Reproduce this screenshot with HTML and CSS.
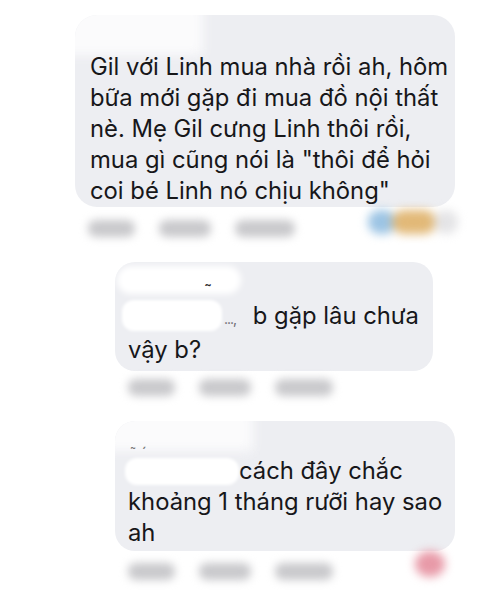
FILE: index.html
```html
<!DOCTYPE html>
<html lang="vi">
<head>
<meta charset="utf-8">
<title>Bình luận</title>
<link rel="stylesheet" href="styles.css">
</head>
<body>
<div class="thread">
  <div class="comment c1">
    <div class="bubble b1">
      <span class="mask mask-name1"></span>
      <p class="text">Gil với Linh mua nhà rồi ah, hôm<br>bữa mới gặp đi mua đồ nội thất<br>nè. Mẹ Gil cưng Linh thôi rồi,<br>mua gì cũng nói là "thôi để hỏi<br>coi bé Linh nó chịu không"</p>
    </div>
    <div class="actions a-row1">
      <span class="act w47"></span>
      <span class="act w53"></span>
      <span class="act w60"></span>
      <span class="reacts">
        <span class="r-blue"></span>
        <span class="r-orange"></span>
        <span class="r-gray"></span>
      </span>
    </div>
  </div>

  <div class="comment c2">
    <div class="bubble b2">
      <span class="mask mask-name2"></span>
      <span class="mark mark-tilde">˜</span>
      <p class="text"><span class="hidden-name"></span><span class="dots">...,</span> b gặp lâu chưa<br>vậy b?</p>
    </div>
    <div class="actions a-row2">
      <span class="act w47"></span>
      <span class="act w53"></span>
      <span class="act w58"></span>
    </div>
  </div>

  <div class="comment c3">
    <div class="bubble b3">
      <span class="mask mask-name3"></span>
      <span class="mark mark-top">˜ ˊ</span>
      <p class="text"><span class="hidden-name hn3"></span>cách đây chắc<br>khoảng 1 tháng rưỡi hay sao<br>ah</p>
    </div>
    <div class="actions a-row3">
      <span class="act w47"></span>
      <span class="act w53"></span>
      <span class="act w58"></span>
      <span class="react-pink"></span>
    </div>
  </div>
</div>
</body>
</html>
```

FILE: styles.css
```css
* { box-sizing: border-box; }

html, body {
  margin: 0;
  padding: 0;
  background: #ffffff;
  overflow: hidden;
}

body {
  font-family: Inter, "Liberation Sans", Arial, sans-serif;
  color: #17171a;
  width: 480px;
  height: 590px;
}

.thread {
  padding-top: 15px;
}

.bubble {
  position: relative;
  background: #edeef2;
  border-radius: 20px;
  overflow: hidden;
}

.text {
  margin: 0;
  font-size: 23.8px;
  line-height: 31px;
  white-space: nowrap;
  position: relative;
}

.b1 {
  margin-left: 75px;
  width: 380px;
  padding: 36px 8px 1px 15px;
  border-radius: 22px;
}

.b2 {
  margin-left: 115px;
  width: 318px;
  padding: 38px 8px 6px 13px;
}

.b3 {
  margin-left: 115px;
  width: 340px;
  padding: 34px 8px 3px 13px;
}

.mask {
  position: absolute;
  background: #fbfbfc;
  filter: blur(6px);
}

.mask-name1 {
  left: -14px;
  top: -10px;
  width: 142px;
  height: 50px;
}

.mask-name2 {
  left: 2px;
  top: 4px;
  width: 124px;
  height: 28px;
  background: #ffffff;
  filter: blur(3px);
  border-radius: 14px;
}

.mask-name3 {
  left: -12px;
  top: -10px;
  width: 150px;
  height: 40px;
}

.hidden-name {
  display: inline-block;
  width: 100px;
  height: 31px;
  vertical-align: top;
  background: #ffffff;
  border-radius: 12px;
  filter: blur(1.5px);
  margin-left: -6px;
}

.hn3 {
  width: 114px;
  height: 27px;
  margin-right: 0;
  margin-left: -3px;
  margin-top: 3px;
}

.dots {
  font-size: 14px;
  color: #6b6b70;
  letter-spacing: -1px;
  margin-left: 2px;
  margin-right: 10px;
}

.mark {
  position: absolute;
  color: #2a2a2e;
  font-size: 20px;
  line-height: 1;
}

.mark-tilde {
  left: 88px;
  top: 20px;
}

.mark-top {
  left: 14px;
  top: 24px;
  color: #777;
  font-size: 16px;
}

.actions {
  position: relative;
  display: flex;
  align-items: flex-start;
  gap: 24px;
}

.a-row1 {
  margin-left: 88px;
  width: 372px;
  height: 55px;
  padding-top: 13px;
}

.a-row2 {
  margin-left: 128px;
  height: 50px;
  padding-top: 8px;
}

.a-row3 {
  margin-left: 128px;
  width: 327px;
  height: 42px;
  padding-top: 12px;
}

.act {
  display: block;
  height: 17px;
  background: #c9c9cc;
  border-radius: 8px;
  filter: blur(4px);
}

.w47 { width: 47px; }
.w53 { width: 52px; }
.w58 { width: 58px; }
.w60 { width: 60px; }

.reacts {
  position: absolute;
  right: 2px;
  top: 3px;
  display: flex;
  filter: blur(5px);
}

.r-blue {
  width: 28px;
  height: 24px;
  border-radius: 12px;
  background: #9cc4e4;
}

.r-orange {
  width: 44px;
  height: 24px;
  border-radius: 12px;
  background: #e2b978;
  margin-left: -4px;
}

.r-gray {
  width: 24px;
  height: 24px;
  border-radius: 12px;
  background: #e4e4e6;
  margin-left: -2px;
}

.react-pink {
  position: absolute;
  right: 10px;
  top: 0;
  width: 30px;
  height: 26px;
  border-radius: 50%;
  background: #e89aa8;
  filter: blur(5px);
}
```
